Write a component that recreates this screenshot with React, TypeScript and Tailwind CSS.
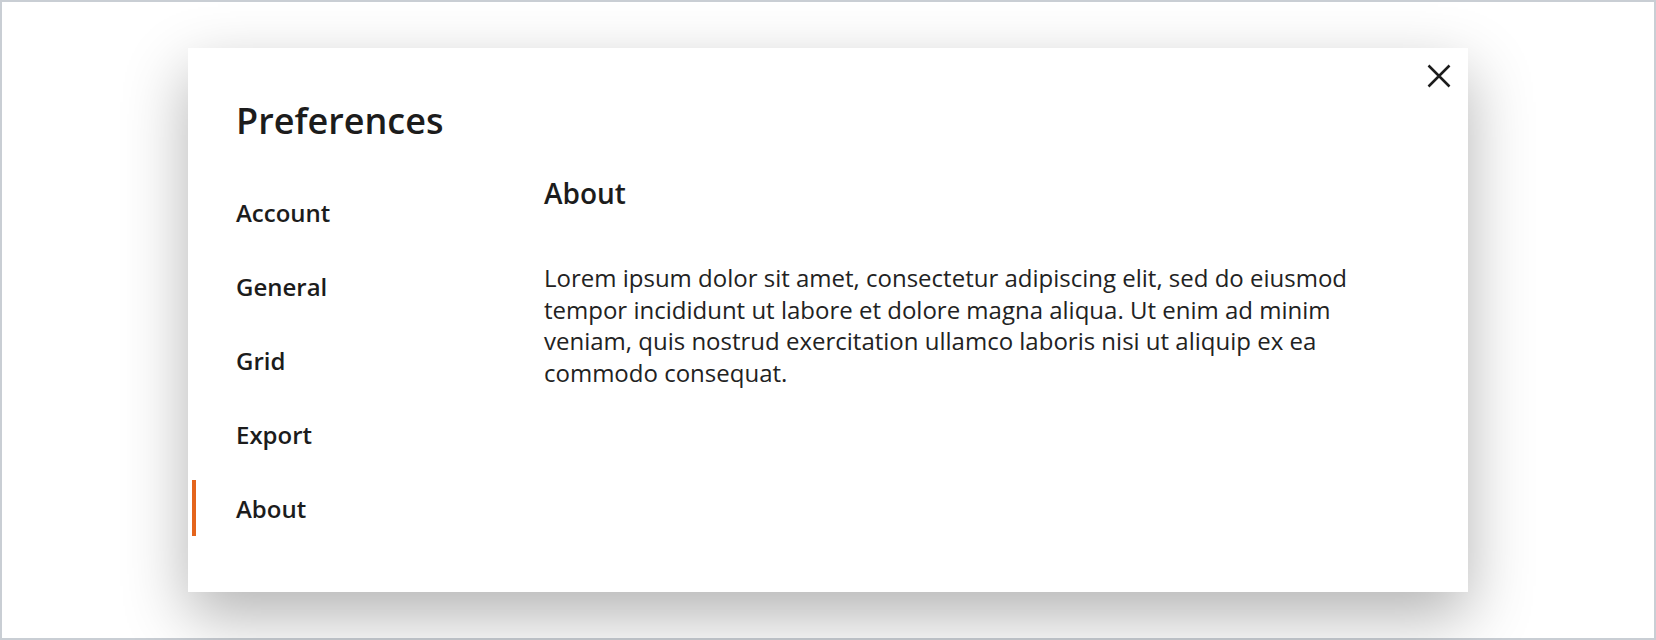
const items = ['Account', 'General', 'Grid', 'Export', 'About'];

export default function App() {
  const active = 'About';

  return (
    <div className="h-[640px] w-full border-2 border-[#c9ced4] bg-white pt-[46px] font-['Open_Sans',sans-serif] text-[#1c1c1c]">
      <div className="relative mx-auto h-[544px] w-[1280px] bg-white shadow-[0_24px_60px_rgba(0,0,0,0.3)]">
        <button className="absolute right-[17px] top-[16px] text-[#1c1c1c]">
          <svg width="24" height="24" viewBox="0 0 24 24" fill="none" stroke="currentColor" strokeWidth="2.5">
            <path d="M1.5 1.5l21 21M22.5 1.5l-21 21" />
          </svg>
        </button>

        <h1 className="pl-[48px] pt-[49px] text-[36px] font-semibold leading-[48px]">Preferences</h1>

        <div className="mt-[39px] flex">
          <nav className="flex w-[356px] flex-col gap-[18px]">
            {items.map((it) => (
              <div
                key={it}
                className={`ml-[4px] flex h-[56px] items-center border-l-4 pl-[40px] pt-[2px] text-[24px] font-semibold ${
                  it === active ? 'border-[#e4641c]' : 'border-transparent'
                }`}
              >
                {it}
              </div>
            ))}
          </nav>

          <section className="-mt-[11px] w-[830px]">
            <h2 className="text-[28px] font-semibold leading-[40px]">About</h2>
            <p className="mt-[49px] text-[24px] leading-[31.7px] text-[#222]">
              Lorem ipsum dolor sit amet, consectetur adipiscing elit, sed do eiusmod tempor incididunt ut labore
              et dolore magna aliqua. Ut enim ad minim veniam, quis nostrud exercitation ullamco laboris nisi ut
              aliquip ex ea commodo consequat.
            </p>
          </section>
        </div>
      </div>
    </div>
  );
}
